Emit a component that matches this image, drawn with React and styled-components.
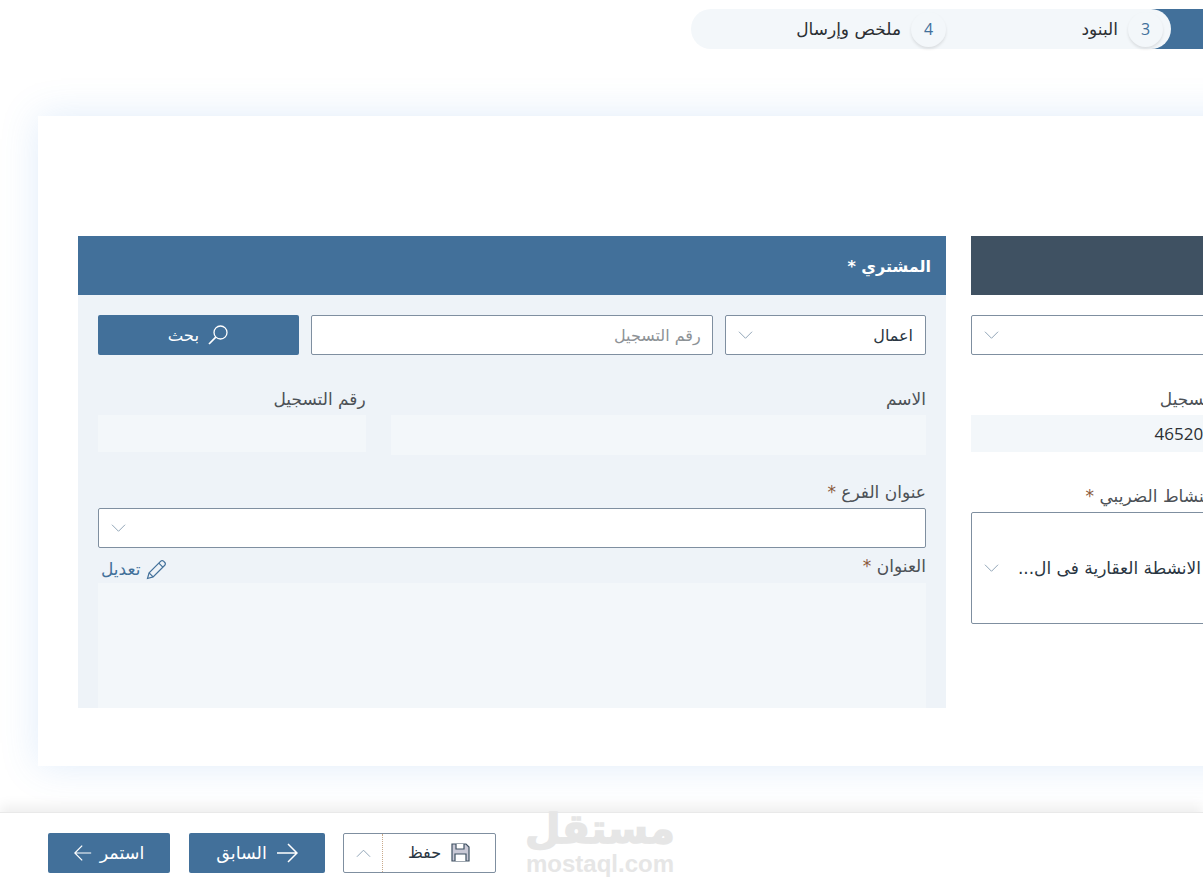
import React from "react";
import styled, { createGlobalStyle } from "styled-components";

const GlobalStyle = createGlobalStyle`
  html, body {
    margin: 0;
    padding: 0;
    background: #fff;
  }
  body {
    font-family: "DejaVu Sans", "Noto Sans", sans-serif;
    overflow: hidden;
  }
  * {
    box-sizing: border-box;
  }
`;

const Page = styled.div`
  width: 100vw;
  height: 892px;
  display: flex;
  flex-direction: column;
  overflow: hidden;
  background: #fff;
`;

const StepperRow = styled.div`
  height: 116px;
  flex: none;
  padding: 9px 0 0 691px;
`;

const Track = styled.div`
  height: 40px;
  display: flex;
  background: linear-gradient(to right, transparent 460px, #42709a 460px);
`;

const StepBar = styled.ol`
  width: 480px;
  height: 40px;
  margin: 0;
  padding: 0 8px 0 0;
  list-style: none;
  display: flex;
  direction: rtl;
  background: #f3f7fa;
  border-radius: 20px;
`;

const Step = styled.li`
  width: 217px;
  display: flex;
  align-items: center;
  gap: 10px;
  font-size: 17px;
  color: #2b2f33;
  white-space: nowrap;
`;

const StepNumber = styled.span`
  width: 35px;
  height: 35px;
  flex: none;
  border-radius: 50%;
  display: flex;
  align-items: center;
  justify-content: center;
  font-family: "Open Sans", sans-serif;
  font-size: 16px;
  color: #42709a;
  background: #f3f7fa;
  box-shadow: 0 2px 3px rgba(0, 0, 0, 0.1);
`;

const Card = styled.main`
  width: 1500px;
  height: 650px;
  flex: none;
  margin-left: 38px;
  padding: 120px 0 58px 40px;
  display: flex;
  gap: 25px;
  background: #fff;
  box-shadow: 0 0 36px rgba(70, 145, 225, 0.17);
`;

const Panel = styled.section`
  width: 868px;
  height: 472px;
  flex: none;
  overflow: hidden;
  background: ${(p) => (p.$tinted ? "#eef3f8" : "#fff")};
`;

const PanelHeader = styled.header`
  height: 59px;
  padding: 2px 15px 0;
  display: flex;
  align-items: center;
  direction: rtl;
  font-size: 16px;
  font-weight: 700;
  color: #fff;
  background: ${(p) => p.$bg};
`;

const BuyerBody = styled.div`
  padding: 20px;
  direction: rtl;
`;

const SearchRow = styled.div`
  display: grid;
  grid-template-columns: 1fr 2fr 1fr;
  gap: 12.5px;
  margin-bottom: 36px;
`;

const SelectBox = styled.div`
  height: ${(p) => p.$height || 40}px;
  width: ${(p) => (p.$width ? `${p.$width}px` : "auto")};
  padding: 0 12px;
  display: flex;
  align-items: center;
  justify-content: space-between;
  direction: rtl;
  font-size: ${(p) => p.$fontSize || 16}px;
  color: #2a3642;
  background: #fff;
  border: 1px solid #7f8fa0;
  border-radius: 2px;
  white-space: nowrap;
`;

const Placeholder = styled.div`
  height: 40px;
  padding: 0 11px;
  display: flex;
  align-items: center;
  font-size: 16px;
  color: #8d9296;
  background: #fff;
  border: 1px solid #7f8fa0;
  border-radius: 2px;
`;

const Button = styled.button`
  height: 40px;
  width: ${(p) => (p.$width ? `${p.$width}px` : "auto")};
  padding: 0;
  display: flex;
  align-items: center;
  justify-content: center;
  gap: ${(p) => p.$gap || 8}px;
  font-family: inherit;
  font-size: ${(p) => p.$fontSize || 16.5}px;
  color: #fff;
  background: #42709a;
  border: 0;
  border-radius: 2px;
`;

const InfoRow = styled.div`
  display: grid;
  grid-template-columns: 2fr 1fr;
  gap: 25px;
  margin-bottom: 29px;
`;

const Label = styled.label`
  display: block;
  height: 24px;
  font-size: 17px;
  line-height: 16px;
  color: #4c5156;
  white-space: nowrap;
`;

const Required = styled.span`
  color: #8a5a3a;
`;

const ReadOnly = styled.div`
  height: ${(p) => p.$height || 37}px;
  padding: 0 10px;
  display: flex;
  align-items: center;
  font-family: "Open Sans", sans-serif;
  font-size: 17px;
  color: #2b2f33;
  background: #f3f7fa;
`;

const AddressHead = styled.div`
  height: 35px;
  padding-top: 10px;
  display: flex;
  justify-content: space-between;
`;

const EditLink = styled.a`
  display: flex;
  align-items: center;
  gap: 6px;
  height: 24px;
  margin-top: -1px;
  padding-left: 3px;
  font-size: 17px;
  color: #42709a;
`;

const AddressBox = styled.div`
  height: 160px;
  background: #f3f7fa;
`;

const SellerBody = styled.div`
  padding-top: 20px;
`;

const SellerField = styled.div`
  width: ${(p) => p.$width}px;
  direction: rtl;
  margin-top: ${(p) => p.$top || 0}px;
`;

const Footer = styled.footer`
  position: relative;
  height: 80px;
  margin-top: auto;
  flex: none;
  padding-left: 48px;
  display: flex;
  align-items: center;
  gap: 19px;
  background: #fff;
  border-top: 1px solid #e9e9e9;
  box-shadow: 0 -6px 12px rgba(0, 0, 0, 0.07);
`;

const SaveGroup = styled.div`
  width: 153px;
  height: 40px;
  margin-left: -1px;
  display: flex;
  background: #fff;
  border: 1px solid #7f8fa0;
  border-radius: 2px;
`;

const SaveToggle = styled.span`
  width: 39px;
  display: flex;
  align-items: center;
  justify-content: center;
  border-right: 1px dotted #c9a98a;
`;

const SaveMain = styled.span`
  flex: 1;
  display: flex;
  align-items: center;
  justify-content: center;
  gap: 10px;
  font-size: 16px;
  color: #2a3642;
`;

const Watermark = styled.div`
  position: absolute;
  left: 525px;
  top: -8px;
  width: 150px;
  display: flex;
  flex-direction: column;
  align-items: center;
  pointer-events: none;
  color: #e6e6e6;
  font-weight: 700;
`;

const WatermarkArabic = styled.span`
  display: block;
  height: 48px;
  font-size: 41px;
  line-height: 48px;
  -webkit-text-stroke: 1.5px #e6e6e6;
`;

const WatermarkLatin = styled.span`
  display: block;
  height: 22px;
  font-family: "Liberation Sans", sans-serif;
  font-size: 24px;
  line-height: 22px;
`;

const Chevron = ({ up }) => (
  <svg width="15" height="10" viewBox="0 0 16 10" fill="none" stroke="#8ba0b3" strokeWidth="1">
    <path d={up ? "M1 9l7-7 7 7" : "M1 1.5l7 7 7-7"} />
  </svg>
);

const SearchIcon = () => (
  <svg width="22" height="22" viewBox="0 0 22 22" fill="none" stroke="#fff" strokeWidth="1.3">
    <circle cx="13.5" cy="8.5" r="6.5" />
    <path d="M8.8 13.2 2 20" strokeWidth="1.7" />
  </svg>
);

const PencilIcon = () => (
  <svg width="21" height="21" viewBox="0 0 21 21" fill="none" stroke="#42709a" strokeWidth="1.2">
    <path d="M1.5 19.5l1.6-5.6L14.8 2.2a1.9 1.9 0 0 1 2.7 0l1.3 1.3a1.9 1.9 0 0 1 0 2.7L7.1 17.9z" />
    <path d="M12.8 4.2l4 4M3.1 13.9l4 4" />
  </svg>
);

const SaveIcon = () => (
  <svg width="19" height="19" viewBox="0 0 19 19">
    <path d="M1 1h14l3 3v14H1z" fill="#c9c9d6" stroke="#3f5162" strokeWidth="1.2" />
    <path d="M5 1v5h8V1" fill="#fff" stroke="#3f5162" strokeWidth="1.2" />
    <path d="M4 18v-7h11v7" fill="#fff" stroke="#3f5162" strokeWidth="1.2" />
  </svg>
);

const ArrowIcon = ({ size, right }) => (
  <svg width={size} height={size} viewBox="0 0 22 22" fill="none" stroke="#fff" strokeWidth="1.5">
    <path d={right ? "M1 11h20M12 2l9 9-9 9" : "M21 11H1M10 2l-9 9 9 9"} />
  </svg>
);

const App = () => {
  return (
    <Page>
      <GlobalStyle />
      <StepperRow>
        <Track>
          <StepBar>
            <Step>
              <StepNumber>3</StepNumber>
              البنود
            </Step>
            <Step>
              <StepNumber>4</StepNumber>
              ملخص وإرسال
            </Step>
          </StepBar>
        </Track>
      </StepperRow>

      <Card>
        <Panel $tinted>
          <PanelHeader $bg="#42709a">المشتري *</PanelHeader>
          <BuyerBody>
            <SearchRow>
              <SelectBox>
                <span>اعمال</span>
                <Chevron />
              </SelectBox>
              <Placeholder>رقم التسجيل</Placeholder>
              <Button>
                <SearchIcon />
                بحث
              </Button>
            </SearchRow>
            <InfoRow>
              <div>
                <Label>الاسم</Label>
                <ReadOnly $height={40} />
              </div>
              <div>
                <Label>رقم التسجيل</Label>
                <ReadOnly />
              </div>
            </InfoRow>
            <Label>
              عنوان الفرع <Required>*</Required>
            </Label>
            <SelectBox>
              <span />
              <Chevron />
            </SelectBox>
            <AddressHead>
              <Label>
                العنوان <Required>*</Required>
              </Label>
              <EditLink>
                <PencilIcon />
                تعديل
              </EditLink>
            </AddressHead>
            <AddressBox />
          </BuyerBody>
        </Panel>

        <Panel>
          <PanelHeader $bg="#3f5162" />
          <SellerBody>
            <SelectBox $width={400}>
              <span />
              <Chevron />
            </SelectBox>
            <SellerField $width={281} $top={36}>
              <Label>رقم التسجيل</Label>
              <ReadOnly>465200000</ReadOnly>
            </SellerField>
            <SellerField $width={243} $top={36}>
              <Label>
                النشاط الضريبي <Required>*</Required>
              </Label>
              <SelectBox $height={112} $fontSize={17}>
                <span>الانشطة العقارية فى ال...</span>
                <Chevron />
              </SelectBox>
            </SellerField>
          </SellerBody>
        </Panel>
      </Card>

      <Footer>
        <Button $width={122} $fontSize={17.5}>
          <ArrowIcon size={18} />
          استمر
        </Button>
        <Button $width={136} $fontSize={17.5} $gap={9}>
          السابق
          <ArrowIcon size={22} right />
        </Button>
        <SaveGroup>
          <SaveToggle>
            <Chevron up />
          </SaveToggle>
          <SaveMain>
            حفظ
            <SaveIcon />
          </SaveMain>
        </SaveGroup>
        <Watermark>
          <WatermarkArabic>مستقل</WatermarkArabic>
          <WatermarkLatin>mostaql.com</WatermarkLatin>
        </Watermark>
      </Footer>
    </Page>
  );
};

export default App;
